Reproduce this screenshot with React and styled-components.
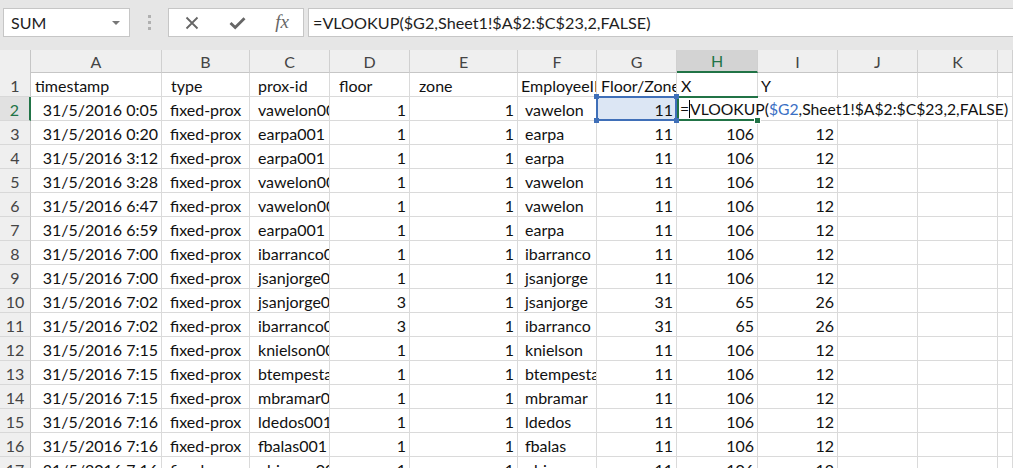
import React from 'react'
import styled, {createGlobalStyle, css} from 'styled-components'

const GREEN = '#217346'
const BLUE = '#3f6fb8'

const GlobalStyle = createGlobalStyle`
  html, body {
    margin: 0;
    padding: 0;
  }
  body {
    background: #e6e6e6;
    font-family: Lato, 'Open Sans', sans-serif;
    overflow: hidden;
  }
`

const COLS = [
  {id: 'A', w: 131, head: 4, data: 4},
  {id: 'B', w: 88, head: 9, data: 8},
  {id: 'C', w: 80, head: 8, data: 8},
  {id: 'D', w: 80, head: 9, data: 4},
  {id: 'E', w: 108, head: 9, data: 4},
  {id: 'F', w: 79, head: 3, data: 7},
  {id: 'G', w: 80, head: 4, data: 4},
  {id: 'H', w: 81, head: 4, data: 4},
  {id: 'I', w: 80, head: 3, data: 4},
  {id: 'J', w: 80, head: 4, data: 4},
  {id: 'K', w: 80, head: 4, data: 4},
  {id: '', w: 0, head: 4, data: 4},
]

const ROWS = [
  ['timestamp', 'type', 'prox-id', 'floor', 'zone', 'EmployeeID', 'Floor/Zone', 'X', 'Y'],
  ['31/5/2016 0:05', 'fixed-prox', 'vawelon001', 1, 1, 'vawelon', 11, 'EDIT', ''],
  ['31/5/2016 0:20', 'fixed-prox', 'earpa001', 1, 1, 'earpa', 11, 106, 12],
  ['31/5/2016 3:12', 'fixed-prox', 'earpa001', 1, 1, 'earpa', 11, 106, 12],
  ['31/5/2016 3:28', 'fixed-prox', 'vawelon001', 1, 1, 'vawelon', 11, 106, 12],
  ['31/5/2016 6:47', 'fixed-prox', 'vawelon001', 1, 1, 'vawelon', 11, 106, 12],
  ['31/5/2016 6:59', 'fixed-prox', 'earpa001', 1, 1, 'earpa', 11, 106, 12],
  ['31/5/2016 7:00', 'fixed-prox', 'ibarranco001', 1, 1, 'ibarranco', 11, 106, 12],
  ['31/5/2016 7:00', 'fixed-prox', 'jsanjorge001', 1, 1, 'jsanjorge', 11, 106, 12],
  ['31/5/2016 7:02', 'fixed-prox', 'jsanjorge001', 3, 1, 'jsanjorge', 31, 65, 26],
  ['31/5/2016 7:02', 'fixed-prox', 'ibarranco001', 3, 1, 'ibarranco', 31, 65, 26],
  ['31/5/2016 7:15', 'fixed-prox', 'knielson001', 1, 1, 'knielson', 11, 106, 12],
  ['31/5/2016 7:15', 'fixed-prox', 'btempesta001', 1, 1, 'btempesta', 11, 106, 12],
  ['31/5/2016 7:15', 'fixed-prox', 'mbramar001', 1, 1, 'mbramar', 11, 106, 12],
  ['31/5/2016 7:16', 'fixed-prox', 'ldedos001', 1, 1, 'ldedos', 11, 106, 12],
  ['31/5/2016 7:16', 'fixed-prox', 'fbalas001', 1, 1, 'fbalas', 11, 106, 12],
  ['31/5/2016 7:16', 'fixed-prox', 'ohiramo001', 1, 1, 'ohiramo', 11, 106, 12],
]

const isNum = (v, r, i) => typeof v === 'number' || (r > 0 && i === 0)

export default function App() {
  return (
    <Frame>
      <GlobalStyle/>
      <Toolbar>
        <NameBox>
          SUM
          <DropArrow/>
        </NameBox>
        <Grip>
          <span/><span/><span/>
        </Grip>
        <FxButtons>
          <svg width="14" height="14" viewBox="0 0 14 14">
            <path d="M1.5 1.5 L12.5 12.5 M12.5 1.5 L1.5 12.5" stroke="#666" strokeWidth="1.8" fill="none"/>
          </svg>
          <svg width="17" height="14" viewBox="0 0 17 14">
            <path d="M1.5 7 L6.2 11.6 L15.5 2.2" stroke="#666" strokeWidth="2.8" fill="none"/>
          </svg>
          <FxLabel>fx</FxLabel>
        </FxButtons>
        <FormulaInput>=VLOOKUP($G2,Sheet1!$A$2:$C$23,2,FALSE)</FormulaInput>
      </Toolbar>

      <Sheet>
        <Corner/>
        {COLS.map((c, i) => (
          <ColHeader key={i} $active={c.id === 'H'}>{c.id}</ColHeader>
        ))}

        {ROWS.map((row, r) => (
          <React.Fragment key={r}>
            <RowHeader $active={r === 1}>{r + 1}</RowHeader>
            {COLS.map((c, i) => {
              const v = row[i]
              if (v === 'EDIT') {
                return (
                  <Cell key={i} $editing>
                    <ActiveBorder/>
                    <Editor>
                      =<Caret/>VLOOKUP(<Ref>$G2</Ref>,Sheet1!$A$2:$C$23,2,FALSE)
                    </Editor>
                    <FillHandle/>
                  </Cell>
                )
              }
              const highlighted = r === 1 && c.id === 'G'
              return (
                <Cell
                  key={i}
                  $num={isNum(v, r, i)}
                  $indent={r === 0 ? c.head : c.data}
                  $ref={highlighted}
                >
                  {v}
                  {highlighted && (
                    <>
                      <RefHandle $top $left/>
                      <RefHandle $top/>
                      <RefHandle $left/>
                      <RefHandle/>
                    </>
                  )}
                </Cell>
              )
            })}
          </React.Fragment>
        ))}
      </Sheet>
    </Frame>
  )
}

const Frame = styled.div`
  width: 1013px;
  height: 468px;
  overflow: hidden;
  background: #e6e6e6;
`

const Toolbar = styled.div`
  height: 50px;
  box-sizing: border-box;
  display: flex;
  align-items: flex-start;
  padding: 8px 0 0 3px;
`

const boxStyle = css`
  height: 29px;
  box-sizing: border-box;
  background: #fff;
  border: 1px solid #c6c6c6;
`

const NameBox = styled.div`
  ${boxStyle};
  width: 127px;
  display: flex;
  align-items: center;
  justify-content: space-between;
  padding: 0 9px 0 7px;
  font-size: 16px;
  color: #222;
`

const DropArrow = styled.span`
  width: 0;
  height: 0;
  border-left: 4px solid transparent;
  border-right: 4px solid transparent;
  border-top: 4px solid #777;
`

const Grip = styled.div`
  width: 38px;
  height: 29px;
  display: flex;
  flex-direction: column;
  align-items: center;
  justify-content: center;
  gap: 3px;
  span {
    width: 3px;
    height: 3px;
    background: #b0b0b0;
  }
`

const FxButtons = styled.div`
  ${boxStyle};
  width: 136px;
  display: flex;
  align-items: center;
  justify-content: space-between;
  padding: 0 14px 0 16px;
`

const FxLabel = styled.span`
  font-family: 'Liberation Serif', serif;
  font-style: italic;
  font-size: 19px;
  color: #666;
  margin-top: -2px;
`

const FormulaInput = styled.div`
  ${boxStyle};
  flex: 1;
  margin-left: 4px;
  border-right: none;
  display: flex;
  align-items: center;
  padding-left: 4px;
  font-size: 16.2px;
  color: #1e1e1e;
  white-space: nowrap;
`

const Sheet = styled.div`
  display: grid;
  grid-template-columns: 31px ${COLS.slice(0, -1).map(c => c.w + 'px').join(' ')} 1fr;
  grid-template-rows: 23px repeat(${ROWS.length}, 24px);
  font-size: 16px;
  color: #111;
`

const headerBase = css`
  box-sizing: border-box;
  background: #efefef;
  color: #444;
  display: flex;
  align-items: center;
  justify-content: center;
  font-size: 16px;
`

const Corner = styled.div`
  ${headerBase};
  border-right: 1px solid #c6c6c6;
`

const ColHeader = styled.div`
  ${headerBase};
  border-right: 1px solid #d0d0d0;
  border-bottom: 1px solid #c6c6c6;
  ${p => p.$active && css`
    background: #d3d3d3;
    color: ${GREEN};
    border-bottom: 2px solid ${GREEN};
  `}
`

const RowHeader = styled.div`
  ${headerBase};
  border-right: 1px solid #c6c6c6;
  border-bottom: 1px solid #d8d8d8;
  padding-top: 1px;
  ${p => p.$active && css`
    background: #e1e1e1;
    color: ${GREEN};
    border-right: 2px solid ${GREEN};
  `}
`

const Cell = styled.div`
  box-sizing: border-box;
  background: #fff;
  border-right: 1px solid #dadada;
  border-bottom: 1px solid #dadada;
  display: flex;
  align-items: center;
  justify-content: ${p => (p.$num ? 'flex-end' : 'flex-start')};
  padding: 1px 3px 0 ${p => (p.$indent ?? 4)}px;
  white-space: nowrap;
  overflow: hidden;
  ${p => p.$ref && css`
    position: relative;
    overflow: visible;
    background: #dce6f4;
    border: 2px solid ${BLUE};
    margin: -1px 0 0 -1px;
    padding-right: 2px;
    z-index: 3;
  `}
  ${p => p.$editing && css`
    position: relative;
    overflow: visible;
    z-index: 2;
  `}
`

const RefHandle = styled.span`
  position: absolute;
  width: 5px;
  height: 5px;
  background: ${BLUE};
  ${p => (p.$top ? 'top: -4px;' : 'bottom: -4px;')}
  ${p => (p.$left ? 'left: -4px;' : 'right: -4px;')}
`

const ActiveBorder = styled.div`
  position: absolute;
  top: -1px;
  left: 0;
  right: -1px;
  bottom: -1px;
  border: 2px solid ${GREEN};
  border-right: none;
  z-index: 3;
`

const Editor = styled.div`
  position: absolute;
  top: 1px;
  left: 1px;
  height: 21px;
  width: 332px;
  background: #fff;
  display: flex;
  align-items: center;
  padding: 1px 0 0 2px;
  box-sizing: border-box;
  white-space: nowrap;
  font-size: 15.7px;
  z-index: 2;
`

const Caret = styled.span`
  display: inline-block;
  width: 1px;
  height: 18px;
  background: #000;
  margin: 0 0 1px;
`

const Ref = styled.span`
  color: #3a6fc4;
`

const FillHandle = styled.span`
  position: absolute;
  right: -4px;
  bottom: -4px;
  width: 5px;
  height: 5px;
  background: ${GREEN};
  border: 1px solid #fff;
  z-index: 4;
`
